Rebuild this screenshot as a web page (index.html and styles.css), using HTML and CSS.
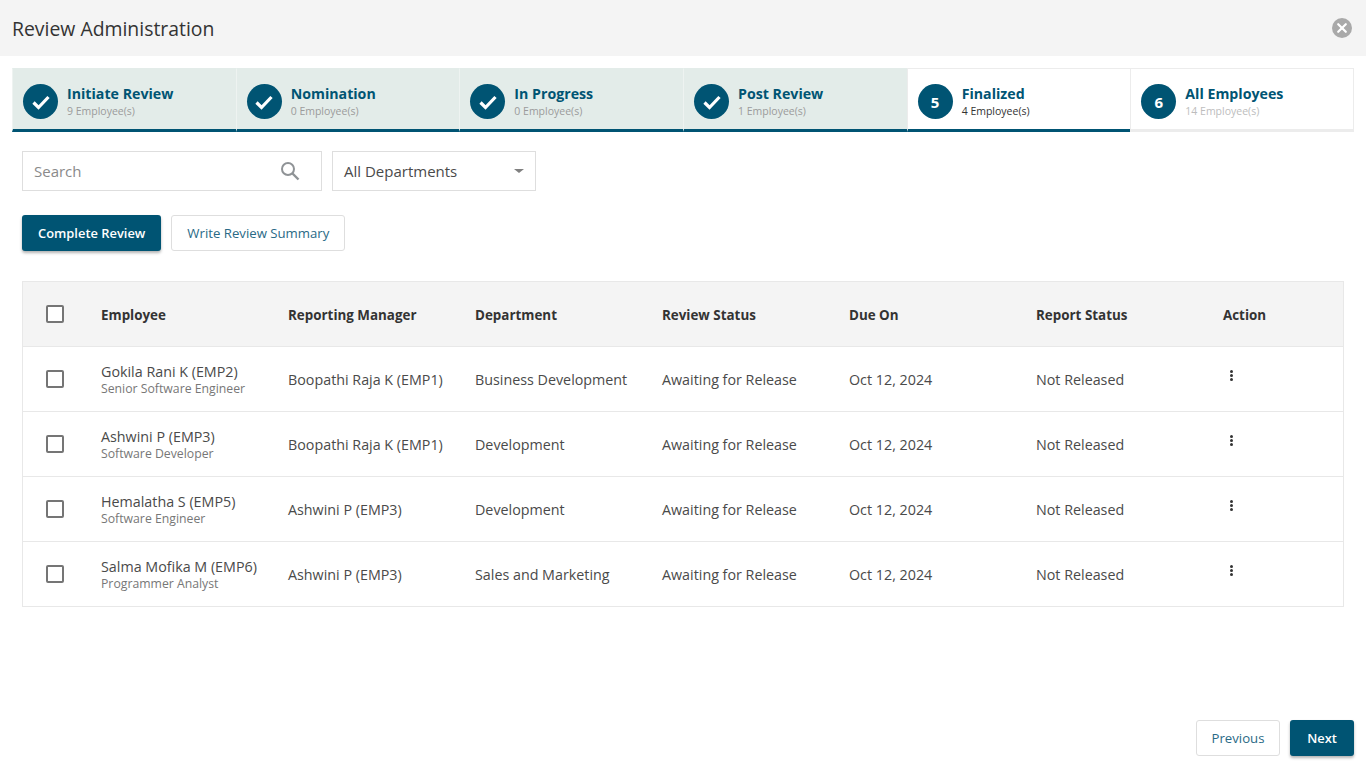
FILE: index.html
```html
<!DOCTYPE html>
<html lang="en">
<head>
    <meta charset="UTF-8">
    <meta name="viewport" content="width=device-width, initial-scale=1.0">
    <title>Review Administration</title>
    <link rel="stylesheet" href="styles.css">
</head>
<body>
    <header class="header">
        <h1 class="title">Review Administration</h1>
        <button class="close" aria-label="Close">
            <svg width="20" height="20" viewBox="0 0 20 20"><path d="M6.2 6.2l7.6 7.6M13.8 6.2l-7.6 7.6" stroke="#fff" stroke-width="2.2" stroke-linecap="round"/></svg>
        </button>
    </header>

    <div class="steps">
        <div class="step done">
            <span class="circle"><svg width="20" height="16" viewBox="0 0 20 16"><path d="M2.5 8.5l5 5 10-10.5" fill="none" stroke="#fff" stroke-width="3.2"/></svg></span>
            <div><div class="step-name">Initiate Review</div><div class="step-count">9 Employee(s)</div></div>
        </div>
        <div class="step done">
            <span class="circle"><svg width="20" height="16" viewBox="0 0 20 16"><path d="M2.5 8.5l5 5 10-10.5" fill="none" stroke="#fff" stroke-width="3.2"/></svg></span>
            <div><div class="step-name">Nomination</div><div class="step-count">0 Employee(s)</div></div>
        </div>
        <div class="step done">
            <span class="circle"><svg width="20" height="16" viewBox="0 0 20 16"><path d="M2.5 8.5l5 5 10-10.5" fill="none" stroke="#fff" stroke-width="3.2"/></svg></span>
            <div><div class="step-name">In Progress</div><div class="step-count">0 Employee(s)</div></div>
        </div>
        <div class="step done">
            <span class="circle"><svg width="20" height="16" viewBox="0 0 20 16"><path d="M2.5 8.5l5 5 10-10.5" fill="none" stroke="#fff" stroke-width="3.2"/></svg></span>
            <div><div class="step-name">Post Review</div><div class="step-count">1 Employee(s)</div></div>
        </div>
        <div class="step active">
            <span class="circle">5</span>
            <div><div class="step-name">Finalized</div><div class="step-count">4 Employee(s)</div></div>
        </div>
        <div class="step">
            <span class="circle">6</span>
            <div><div class="step-name">All Employees</div><div class="step-count">14 Employee(s)</div></div>
        </div>
    </div>

    <main class="content">
        <div class="filters">
            <div class="search">
                <span class="placeholder">Search</span>
                <svg width="20" height="20" viewBox="0 0 20 20"><circle cx="8" cy="8" r="6" fill="none" stroke="#8f9396" stroke-width="2"/><path d="M12.5 12.5l6 6" stroke="#8f9396" stroke-width="2.4"/></svg>
            </div>
            <div class="select">
                <span>All Departments</span>
                <span class="caret"></span>
            </div>
        </div>

        <div class="actions">
            <button class="btn btn-primary">Complete Review</button>
            <button class="btn btn-outline">Write Review Summary</button>
        </div>

        <table class="grid">
            <thead>
                <tr>
                    <th class="check-col"><span class="check"></span></th>
                    <th>Employee</th>
                    <th>Reporting Manager</th>
                    <th>Department</th>
                    <th>Review Status</th>
                    <th>Due On</th>
                    <th>Report Status</th>
                    <th class="action-col">Action</th>
                </tr>
            </thead>
            <tbody>
                <tr>
                    <td class="check-col"><span class="check"></span></td>
                    <td><div class="emp">Gokila Rani K (EMP2)</div><div class="role">Senior Software Engineer</div></td>
                    <td>Boopathi Raja K (EMP1)</td>
                    <td>Business Development</td>
                    <td>Awaiting for Release</td>
                    <td>Oct 12, 2024</td>
                    <td>Not Released</td>
                    <td class="action-col"><span class="dots"><i></i><i></i><i></i></span></td>
                </tr>
                <tr>
                    <td class="check-col"><span class="check"></span></td>
                    <td><div class="emp">Ashwini P (EMP3)</div><div class="role">Software Developer</div></td>
                    <td>Boopathi Raja K (EMP1)</td>
                    <td>Development</td>
                    <td>Awaiting for Release</td>
                    <td>Oct 12, 2024</td>
                    <td>Not Released</td>
                    <td class="action-col"><span class="dots"><i></i><i></i><i></i></span></td>
                </tr>
                <tr>
                    <td class="check-col"><span class="check"></span></td>
                    <td><div class="emp">Hemalatha S (EMP5)</div><div class="role">Software Engineer</div></td>
                    <td>Ashwini P (EMP3)</td>
                    <td>Development</td>
                    <td>Awaiting for Release</td>
                    <td>Oct 12, 2024</td>
                    <td>Not Released</td>
                    <td class="action-col"><span class="dots"><i></i><i></i><i></i></span></td>
                </tr>
                <tr>
                    <td class="check-col"><span class="check"></span></td>
                    <td><div class="emp">Salma Mofika M (EMP6)</div><div class="role">Programmer Analyst</div></td>
                    <td>Ashwini P (EMP3)</td>
                    <td>Sales and Marketing</td>
                    <td>Awaiting for Release</td>
                    <td>Oct 12, 2024</td>
                    <td>Not Released</td>
                    <td class="action-col"><span class="dots"><i></i><i></i><i></i></span></td>
                </tr>
            </tbody>
        </table>
    </main>

    <footer class="footer">
        <button class="btn btn-outline">Previous</button>
        <button class="btn btn-primary">Next</button>
    </footer>
</body>
</html>
```

FILE: styles.css
```css
* {
    box-sizing: border-box;
}

html, body {
    height: 100%;
}

body {
    margin: 0;
    display: flex;
    flex-direction: column;
    height: 768px;
    overflow: hidden;
    background-color: #fff;
    color: #4a4a4a;
    font-family: "Open Sans", "Noto Sans", sans-serif;
    font-size: 14.3px;
}

/* header */
.header {
    display: flex;
    justify-content: space-between;
    align-items: center;
    height: 56px;
    padding: 0 14px 0 12px;
    background-color: #f4f4f4;
}

.title {
    margin: 0;
    padding-top: 1px;
    font-size: 19.4px;
    font-weight: 400;
    color: #333;
}

.close {
    display: flex;
    align-items: center;
    justify-content: center;
    width: 20px;
    height: 20px;
    padding: 0;
    border: none;
    border-radius: 50%;
    background-color: #a9a9a9;
}

/* stepper */
.steps {
    display: grid;
    grid-template-columns: repeat(6, 1fr);
    height: 64px;
    margin: 12px 12px 0;
}

.step {
    display: flex;
    align-items: center;
    gap: 9px;
    padding: 5px 10px 0;
    border-top: 1px solid #ececec;
    border-left: 1px solid #ececec;
    border-bottom: 3px solid #ececec;
}

.step:last-child {
    border-right: 1px solid #ececec;
}

.step.done {
    background-color: #e3ece9;
    border-top-color: #e3ece9;
    border-left-color: #eef3f1;
    border-bottom-color: #005473;
}

.step.active {
    border-bottom-color: #005473;
}

.circle {
    display: flex;
    flex: none;
    align-items: center;
    justify-content: center;
    width: 35px;
    height: 35px;
    border-radius: 50%;
    background-color: #005473;
    color: #fff;
    font-size: 15px;
    font-weight: 700;
}

.step-name {
    color: #005473;
    font-size: 14.2px;
    font-weight: 700;
    line-height: 18px;
}

.step-count {
    color: #9b9b9b;
    font-size: 10.5px;
    line-height: 16px;
}

.step.active .step-count {
    color: #333;
}

.step:last-child .step-count {
    color: #bdbdbd;
}

/* filters */
.content {
    flex: 1;
    padding: 19px 22px 0;
}

.filters {
    display: flex;
    gap: 10px;
    font-size: 15px;
}

.search, .select {
    display: flex;
    align-items: center;
    justify-content: space-between;
    height: 40px;
    border: 1px solid #dedede;
}

.search {
    width: 300px;
    padding: 0 21px 0 11px;
}

.placeholder {
    color: #8a8a8a;
}

.select {
    width: 204px;
    padding: 0 11px;
}

.caret {
    width: 0;
    height: 0;
    border-top: 4px solid #808080;
    border-left: 5px solid transparent;
    border-right: 5px solid transparent;
}

/* buttons */
.actions {
    display: flex;
    gap: 10px;
    margin-top: 24px;
}

.btn {
    min-width: 64px;
    height: 36px;
    padding: 0 15px;
    border-radius: 3px;
    font-family: inherit;
}

.btn-primary {
    padding: 0 16px;
    border: none;
    background-color: #005473;
    color: #fff;
    font-size: 12.9px;
    font-weight: 600;
    box-shadow: 0 2px 3px rgba(0, 0, 0, 0.3);
}

.btn-outline {
    border: 1px solid #dedede;
    background-color: #fff;
    color: #2a6a86;
    font-size: 13.2px;
}

/* table */
.grid {
    width: 1321px;
    margin-top: 30px;
    border-collapse: collapse;
    table-layout: fixed;
    border: 1px solid #e8e8e8;
}

.grid th, .grid td {
    width: 187px;
    padding: 0 0 0 0.5px;
    text-align: left;
    border-bottom: 1px solid #e8e8e8;
}

.grid thead tr {
    height: 65px;
    background-color: #f4f4f4;
}

.grid tbody tr {
    height: 65px;
}

.grid th {
    padding-top: 1px;
    color: #333;
    font-size: 13.4px;
    font-weight: 700;
}

.grid .check-col {
    width: 78px;
    padding: 0 0 0 23px;
}

.grid .action-col {
    width: 121px;
}

.check {
    display: block;
    width: 18px;
    height: 18px;
    border: 2px solid #757575;
    border-radius: 2px;
    background-color: #fff;
}

.emp {
    line-height: 19px;
}

.role {
    color: #777;
    font-size: 12.25px;
    line-height: 16px;
}

.dots {
    display: flex;
    flex-direction: column;
    gap: 1px;
    width: 3px;
    margin: -7px 0 0 7px;
}

.dots i {
    width: 3px;
    height: 3px;
    border-radius: 50%;
    background-color: #333;
}

/* footer */
.footer {
    display: flex;
    justify-content: flex-end;
    gap: 10px;
    padding: 0 12px 12px;
}

.footer .btn-outline {
    width: 84px;
    padding: 0;
}
```
